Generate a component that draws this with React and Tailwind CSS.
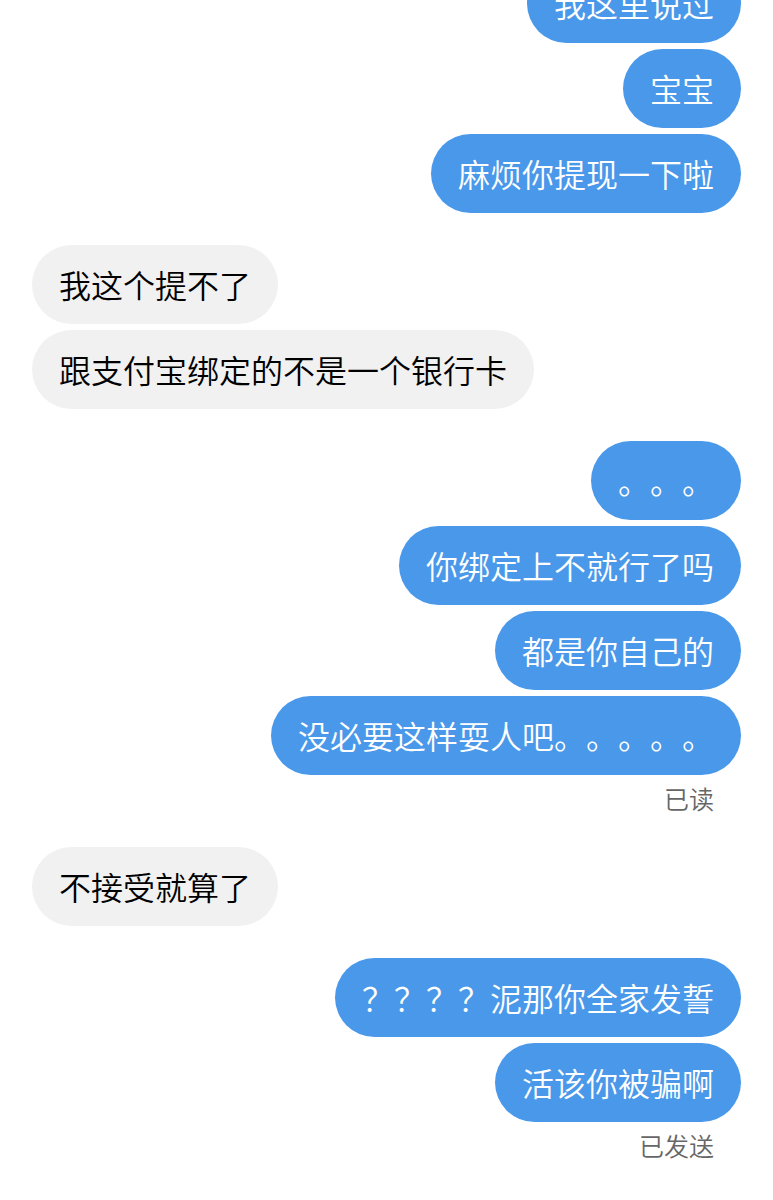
import React from 'react';
import clsx from 'clsx';

const groups = [
  { id: 1, mine: true, messages: ['我这里说过', '宝宝', '麻烦你提现一下啦'] },
  { id: 2, mine: false, messages: ['我这个提不了', '跟支付宝绑定的不是一个银行卡'] },
  {
    id: 3,
    mine: true,
    messages: ['。。。', '你绑定上不就行了吗', '都是你自己的', '没必要这样耍人吧。。。。。'],
    status: '已读',
  },
  { id: 4, mine: false, messages: ['不接受就算了'] },
  { id: 5, mine: true, messages: ['？？？？泥那你全家发誓', '活该你被骗啊'], status: '已发送' },
];

const Bubble = ({ text, mine }) => (
  <li
    className={clsx(
      'max-w-full rounded-[40px] px-[27px] py-[15px] text-[32px] leading-[49px]',
      mine ? 'bg-[#4a98e9] text-white' : 'bg-[#f1f1f1] text-black'
    )}
  >
    {text}
  </li>
);

const MessageGroup = ({ group }) => (
  <section className={clsx('flex flex-col', group.mine ? 'items-end' : 'items-start')}>
    <ul className={clsx('flex flex-col gap-[6px]', group.mine ? 'items-end' : 'items-start')}>
      {group.messages.map((text) => (
        <Bubble key={text} text={text} mine={group.mine} />
      ))}
    </ul>
    {group.status && (
      <p className="px-[27px] pt-[7px] pb-px text-[25px] leading-8 text-[#666666]">{group.status}</p>
    )}
  </section>
);

export default function App() {
  return (
    <div className="min-h-screen overflow-hidden bg-white font-['Noto_Sans_CJK_SC',sans-serif] font-[350] [text-spacing-trim:space-all]">
      {/* scrolled so the oldest bubble is partly out of view */}
      <main className="-mt-9 flex flex-col gap-8 px-8 pb-8">
        {groups.map((group) => (
          <MessageGroup key={group.id} group={group} />
        ))}
      </main>
    </div>
  );
}
